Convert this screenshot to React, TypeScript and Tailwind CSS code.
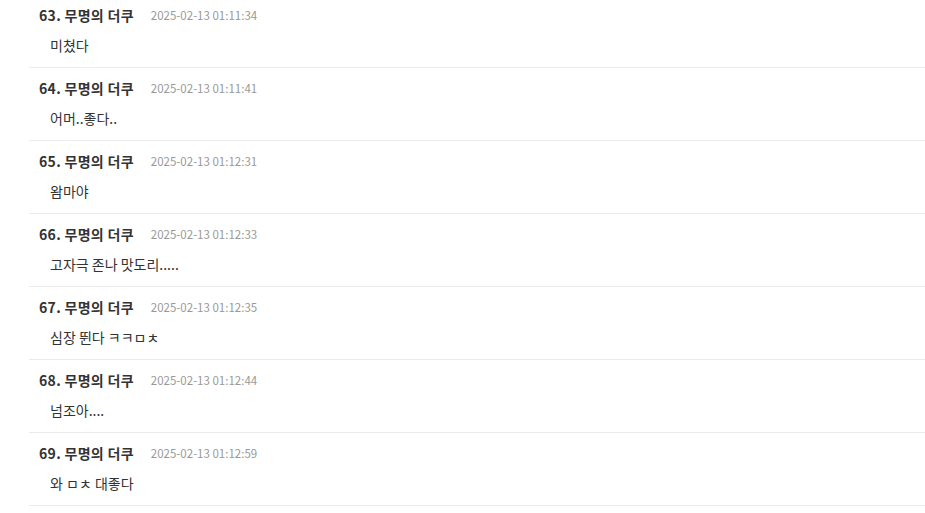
const comments = [
  { no: 63, date: "2025-02-13 01:11:34", text: "미쳤다" },
  { no: 64, date: "2025-02-13 01:11:41", text: "어머..좋다.." },
  { no: 65, date: "2025-02-13 01:12:31", text: "왐마야" },
  { no: 66, date: "2025-02-13 01:12:33", text: "고자극 존나 맛도리....." },
  { no: 67, date: "2025-02-13 01:12:35", text: "심장 뛴다 ㅋㅋㅁㅊ" },
  { no: 68, date: "2025-02-13 01:12:44", text: "넘조아...." },
  { no: 69, date: "2025-02-13 01:12:59", text: "와 ㅁㅊ 대좋다" },
];

export default function App() {
  return (
    <div
      className="h-[513px] w-[925px] overflow-hidden bg-white text-[#333]"
      style={{ fontFamily: '"Noto Sans CJK KR", "Noto Sans", sans-serif' }}
    >
      <ul className="ml-[29px] -mt-[5px]">
        {comments.map((c) => (
          <li key={c.no} className="border-b border-[#ebebeb] pl-[10px] pt-[10px] pb-[12px]">
            <div className="flex h-5 items-center">
              <span className="text-[14px] font-bold tracking-[0.3px] text-[#333]">
                {c.no}. 무명의 더쿠
              </span>
              <span className="ml-[17px] mt-[2px] text-[11.5px] text-[#999]">{c.date}</span>
            </div>
            <p className="mt-[10px] h-5 pl-[11px] text-[14px] leading-5 text-[#333]">{c.text}</p>
          </li>
        ))}
      </ul>
    </div>
  );
}
